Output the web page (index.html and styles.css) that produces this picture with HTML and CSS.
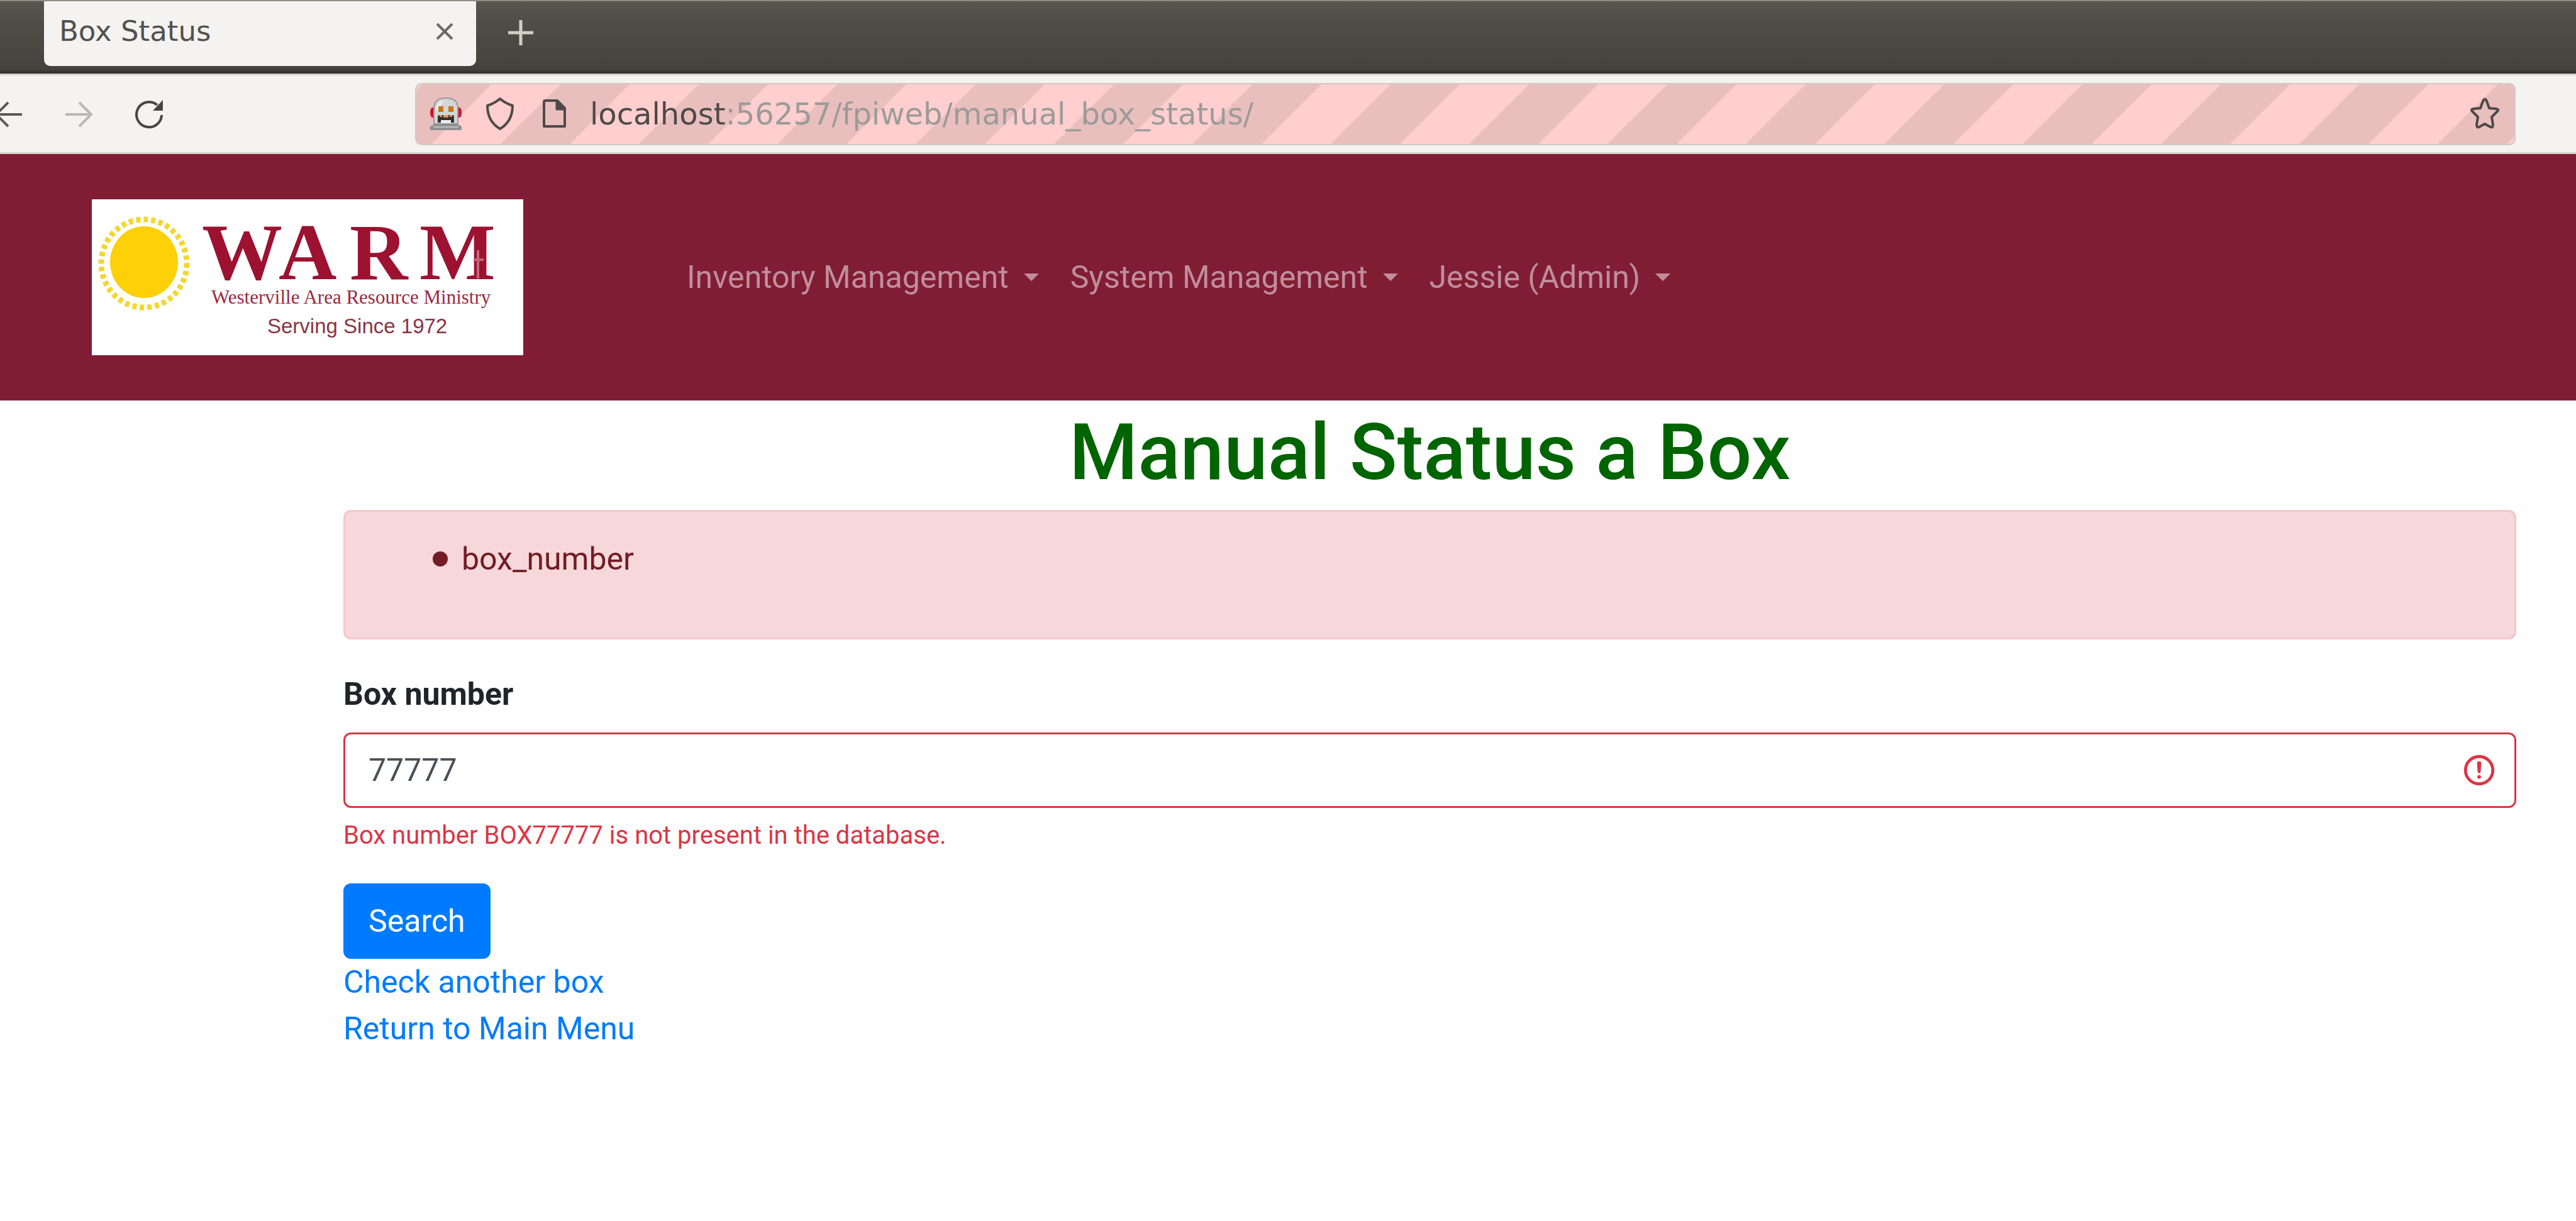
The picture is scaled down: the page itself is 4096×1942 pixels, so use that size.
FILE: index.html
```html
<!DOCTYPE html>
<html lang="en">
<head>
<meta charset="utf-8">
<title>Box Status</title>
<link rel="stylesheet" href="styles.css">
</head>
<body>
<div class="tab-strip">
  <div class="tab">
    <span class="tab-title">Box Status</span>
    <button class="icon-button" type="button" aria-label="Close tab">
      <svg width="28" height="28" viewBox="0 0 28 28" fill="none" stroke="#6a6a68" stroke-width="4"><path d="M2 2l24 24M26 2L2 26"/></svg>
    </button>
  </div>
  <button class="icon-button new-tab" type="button" aria-label="New tab">
    <svg width="40" height="40" viewBox="0 0 40 40" fill="none" stroke="#d2cfc3" stroke-width="5"><path d="M20 0v40M0 20h40"/></svg>
  </button>
</div>

<div class="toolbar">
  <div class="history">
    <button class="icon-button" type="button" aria-label="Back">
      <svg width="39" height="50" viewBox="8 0 39 50" fill="none" stroke="#5a5a58" stroke-width="4"><path d="M43 26H2M21 7L2 26l19 19"/></svg>
    </button>
    <button class="icon-button" type="button" aria-label="Forward" disabled>
      <svg width="50" height="50" viewBox="0 0 50 50" fill="none" stroke="#b9b8b5" stroke-width="4"><path d="M4 26h41M26 7l19 19-19 19"/></svg>
    </button>
    <button class="icon-button" type="button" aria-label="Reload">
      <svg width="50" height="50" viewBox="0 0 50 50" fill="none" stroke="#454543" stroke-width="4"><path d="M46 27A20 20 0 1 1 39 11"/><path d="M48 3v17H32z" fill="#454543" stroke="none"/></svg>
    </button>
  </div>
  <div class="address">
    <svg width="50" height="52" viewBox="0 0 50 52" aria-hidden="true">
      <path d="M6 16H3q-3 2-3 8t3 8h3zM44 16h3q3 2 3 8t-3 8h-3z" fill="#d0122f"/>
      <path d="M6 42V17Q6 1 25 1t19 16v25z" fill="#d3d5d6" stroke="#96999a" stroke-width="2"/>
      <path d="M10 22V14q3-8 12-9-5 5-6 11z" fill="#eceeee"/>
      <rect x="13" y="14" width="8" height="9" fill="#c97412"/>
      <rect x="29" y="14" width="8" height="9" fill="#c97412"/>
      <path d="M12 40V31q0-3 3-3h20q3 0 3 3v9z" fill="#33302e"/>
      <path d="M15 28h4v3h-4zM21 28h8v4h-8zM31 28h4v3h-4z" fill="#dd9557"/>
      <rect x="17" y="36" width="16" height="5" fill="#eeeeee"/>
      <path d="M0 52v-5q0-2 5-3v-2h40v2q5 1 5 3v5z" fill="#8f9292"/>
      <path d="M5 47h40" stroke="#bfc2c2" stroke-width="2"/>
    </svg>
    <svg width="46" height="54" viewBox="0 0 46 54" fill="none" stroke="#4e4a49" stroke-width="4" stroke-linejoin="round" aria-hidden="true"><path d="M23 3q8 7 20 11 0 25-20 37Q3 39 3 14 15 10 23 3z"/></svg>
    <svg width="46" height="46" viewBox="-6 0 46 46" fill="none" stroke="#4e4a49" stroke-width="4" stroke-linejoin="round" aria-hidden="true"><path d="M5 2h19l12 12v29H3V4q0-2 2-2z"/><path d="M23 3v13h13z" fill="#4e4a49" stroke-width="3"/></svg>
    <input class="url" type="text" aria-label="Address" value="localhost:56257/fpiweb/manual_box_status/">
    <button class="icon-button" type="button" aria-label="Bookmark this page">
      <svg width="50" height="52" viewBox="0 0 50 52" fill="none" stroke="#4e4a49" stroke-width="4" stroke-linejoin="round"><path d="M25 3q2 0 3 3l4 11 11 1q5 1 2 4l-9 9 2 12q0 6-4 4l-9-5-9 5q-4 2-4-4l2-12-9-9q-3-3 2-4l11-1 4-11q1-3 3-3z"/></svg>
    </button>
  </div>
</div>

<header class="navbar">
  <a class="brand" href="#">
    <svg width="686" height="248" viewBox="0 0 686 248" role="img" aria-label="WARM">
      <rect width="686" height="248" fill="#fff"/>
      <ellipse cx="83" cy="100" rx="54" ry="57" fill="#fdd008"/>
      <ellipse cx="83" cy="102" rx="68" ry="70" fill="none" stroke="#f5d62e" stroke-width="9" stroke-dasharray="7 5"/>
      <text class="brand-name" x="175 297 410 521" y="127">WARM</text>
      <path d="M614 81v45M607 96h16" stroke="#c4667a" stroke-width="4"/>
      <text class="brand-full" x="190" y="166">Westerville Area Resource Ministry</text>
      <text class="brand-since" x="279" y="213">Serving Since 1972</text>
    </svg>
  </a>
  <nav class="menu">
    <a class="menu-link" href="#">Inventory Management</a>
    <a class="menu-link" href="#">System Management</a>
    <a class="menu-link" href="#">Jessie (Admin)</a>
  </nav>
</header>

<main class="content">
  <h1 class="title">Manual Status a Box</h1>
  <div class="alert" role="alert">
    <ul class="alert-list"><li>box_number</li></ul>
  </div>
  <form class="form">
    <label class="label" for="box-number">Box number</label>
    <div class="field">
      <input class="field-input" id="box-number" type="text" value="77777" aria-describedby="box-error">
      <svg width="58" height="58" viewBox="0 0 12 12" fill="none" stroke="#dc3545" aria-hidden="true"><circle cx="6" cy="6" r="4.5"/><path stroke-linejoin="round" d="M5.8 3.6h.4L6 6.5z"/><circle cx="6" cy="8.2" r=".6" fill="#dc3545" stroke="none"/></svg>
    </div>
    <p class="error" id="box-error">Box number BOX77777 is not present in the database.</p>
    <button class="submit" type="button">Search</button>
  </form>
  <div class="links">
    <a href="#">Check another box</a>
    <a href="#">Return to Main Menu</a>
  </div>
</main>
</body>
</html>
```
FILE: styles.css
```css
* {
  box-sizing: border-box;
}

body {
  margin: 0;
  background: #fefefe;
  color: #212529;
  font-family: Roboto, sans-serif;
  font-size: 50px;
  line-height: 74px;
}

svg {
  display: block;
  flex: none;
}

a {
  color: #007bff;
  text-decoration: none;
}

.icon-button {
  padding: 0;
  border: 0;
  background: none;
}

/* Browser tabs */
.tab-strip {
  display: flex;
  align-items: flex-start;
  height: 117px;
  padding-left: 70px;
  border-top: 2px solid #8e8d87;
  background: linear-gradient(#59564c, #504f47 25%, #43423d 94%, #2e2d2a);
}

.tab {
  display: flex;
  align-items: center;
  justify-content: space-between;
  width: 687px;
  height: 103px;
  padding: 0 36px 8px 24px;
  border-radius: 0 0 10px 10px;
  background: #f4f3f1;
}

.tab-title {
  color: #51514f;
  font-family: "DejaVu Sans", sans-serif;
  font-size: 45px;
}

.new-tab {
  margin: 30px 0 0 51px;
}

/* Address bar */
.toolbar {
  display: grid;
  grid-template-columns: 660px 1fr;
  align-items: center;
  height: 128px;
  padding-right: 96px;
  border-top: 3px solid #d5d4d1;
  border-bottom: 3px solid #d5d4d1;
  background: #f4f3f1;
}

.history {
  display: flex;
  gap: 61px;
}

.address {
  display: flex;
  align-items: center;
  height: 99px;
  padding: 0 22px;
  border: 2px solid #d3c8c3;
  border-radius: 10px;
  background: linear-gradient(135deg, #e9bfbe 25%, #ffcece 25% 50%, #e9bfbe 50% 75%, #ffcece 75%) 9px 0 / 220px 220px;
}

.address svg + svg {
  margin-left: 38px;
}

.url {
  flex: 1;
  min-width: 0;
  margin-left: 36px;
  padding: 0;
  border: 0;
  outline: 0;
  background: linear-gradient(90deg, #4e4a49 216px, #9b9b99 216px);
  background-clip: text;
  -webkit-background-clip: text;
  color: transparent;
  font-family: "DejaVu Sans", sans-serif;
  font-size: 48px;
  line-height: 74px;
}

/* Site header */
.navbar {
  display: flex;
  align-items: center;
  gap: 235px;
  padding: 72px 146px;
  background: #801d34;
}

.brand-name {
  fill: #9c1230;
  font-family: "Liberation Serif", serif;
  font-size: 128px;
  font-weight: 700;
}

.brand-full {
  fill: #9c2740;
  font-family: "Liberation Serif", serif;
  font-size: 31px;
}

.brand-since {
  fill: #8a3443;
  font-family: "Liberation Sans", sans-serif;
  font-size: 33px;
}

.menu {
  display: flex;
}

.menu-link {
  display: flex;
  align-items: center;
  gap: 24px;
  padding: 0 25px;
  color: #c08e9a;
}

.menu-link::after {
  content: "";
  border: 12px solid transparent;
  border-top-color: currentColor;
  border-bottom: 0;
}

/* Page */
.content {
  padding: 8px 95px 0 546px;
}

.title {
  margin: 0 0 16px;
  color: #006400;
  font-size: 125px;
  font-weight: 500;
  line-height: 150px;
  text-align: center;
}

.alert {
  margin-bottom: 50px;
  padding: 38px 62px;
  border: 3px solid #f5c6cb;
  border-radius: 12px;
  background: #f6d7da;
  color: #721c24;
}

.alert-list {
  margin: 0 0 50px;
  padding: 0 0 0 77px;
  list-style: none;
}

.alert-list li {
  display: flex;
  align-items: center;
  gap: 22px;
}

.alert-list li::before {
  content: "";
  width: 24px;
  height: 24px;
  border-radius: 50%;
  background: currentColor;
}

.label {
  display: block;
  margin-bottom: 24px;
  font-weight: 700;
}

.field {
  display: flex;
  align-items: center;
  height: 120px;
  padding: 0 27px 0 37px;
  border: 3px solid #dc3545;
  border-radius: 12px;
  background: #fff;
}

.field-input {
  flex: 1;
  min-width: 0;
  padding: 0;
  border: 0;
  outline: 0;
  background: none;
  color: #495057;
  font: inherit;
}

.error {
  margin: 14px 0 46px;
  color: #dc3545;
  font-size: 40px;
  line-height: 60px;
}

.submit {
  display: block;
  height: 120px;
  padding: 0 37px;
  border: 3px solid #007bff;
  border-radius: 12px;
  background: #007bff;
  color: #fff;
  font: inherit;
}

.links {
  display: flex;
  flex-direction: column;
  align-items: flex-start;
}
```
